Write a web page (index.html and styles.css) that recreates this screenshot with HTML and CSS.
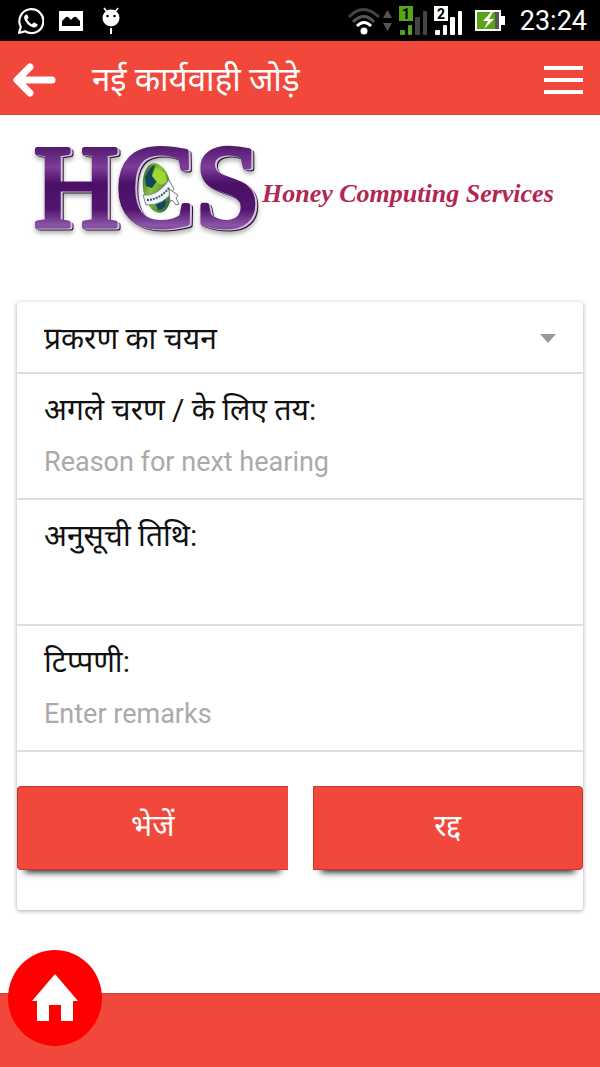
FILE: index.html
```html
<!DOCTYPE html>
<html lang="hi">
<head>
<meta charset="utf-8">
<meta name="viewport" content="width=device-width, initial-scale=1">
<title>नई कार्यवाही जोड़े</title>
<link rel="stylesheet" href="styles.css">
</head>
<body class="page">
<div class="status">
  <div class="status-left">
    <svg width="28" height="28" viewBox="0 0 28 28" aria-hidden="true"><path d="M3 26l1.800-6.200A12 12 0 1 1 9 24.300z" fill="none" stroke="#fff" stroke-width="2.200" stroke-linejoin="round"/><path d="M10 7.500c-2 1-2.500 3-1.200 5.500 2 4 5 6.500 8.700 7.500 2 .4 4-.8 4-3.200l-3.700-2-1.800 1.900c-2-.8-3.800-2.600-4.800-4.700l1.400-1.700-1.300-3.200z" fill="#fff"/></svg>
    <svg width="24" height="20" viewBox="0 0 24 20" aria-hidden="true"><path d="M0 0h24v20H0z" fill="#fff"/><path d="M3 15v-5l4-4q2-1 5 3 3-4 5-3l4 4v5z" fill="#000"/></svg>
    <svg width="18" height="28" viewBox="0 0 18 28" aria-hidden="true"><path d="M2 1l3 4M16 1l-3 4" stroke="#fff" stroke-width="1.500"/><circle cx="9" cy="11" r="8.500" fill="#fff"/><path d="M9 21v6" stroke="#fff" stroke-width="2"/><circle cx="5.500" cy="9" r="1.300"/><circle cx="12.500" cy="9" r="1.300"/></svg>
  </div>
  <div class="status-right">
    <svg width="46" height="30" viewBox="0 0 46 30" fill="none" aria-hidden="true"><path d="M2 11q14-15 30 0" stroke="#444" stroke-width="3"/><path d="M6 16q11-11 21 0" stroke="#555" stroke-width="3"/><path d="M10 20q7-7 14 0" stroke="#fff" stroke-width="3"/><circle cx="17" cy="25" r="3.500" fill="#fff"/><path d="M36 12l4.500-8 4.500 8zM36 17h9l-4.500 8z" fill="#555"/></svg>
    <svg width="30" height="30" viewBox="0 0 30 30" aria-hidden="true"><path d="M1 0h14v15H1z" fill="#57a517"/><text class="sim" x="4" y="13" fill="#000">1</text><rect x="2" y="24" width="5" height="5" rx="1" fill="#57a517"/><rect x="10" y="19" width="4" height="10" rx="1" fill="#57a517"/><rect x="17" y="11" width="5" height="18" rx="1" fill="#444"/><rect x="25" y="5" width="4" height="24" rx="1" fill="#444"/></svg>
    <svg width="30" height="30" viewBox="0 0 30 30" aria-hidden="true"><path d="M1 0h14v15H1z" fill="#fff"/><text class="sim" x="4" y="13" fill="#000">2</text><g fill="#fff"><rect x="2" y="24" width="5" height="5" rx="1"/><rect x="10" y="19" width="4" height="10" rx="1"/><rect x="17" y="11" width="5" height="18" rx="1"/><rect x="25" y="5" width="4" height="24" rx="1"/></g></svg>
    <svg class="battery" width="32" height="23" viewBox="0 0 32 23" aria-hidden="true"><path d="M1 1h26v6h4v9h-4v6H1z" fill="#fff"/><path d="M3 3h18v17H3z" fill="#57a517"/><path d="M21 3h4v17h-4z" fill="#555"/><path d="M17 3L9 12h5l-4 8 10-10h-5l4-7z" fill="#fff"/></svg>
    <span class="clock">23:24</span>
  </div>
</div>
<header class="bar">
  <button class="icon-btn" type="button" aria-label="Back"><svg width="43" height="34" viewBox="0 0 43 34" fill="none" stroke="#fff" stroke-width="7" stroke-linecap="round" stroke-linejoin="round"><path d="M39 17H5M17 4L4 17l13 13"/></svg></button>
  <h1 class="title">नई कार्यवाही जोड़े</h1>
  <button class="icon-btn" type="button" aria-label="Menu"><svg width="39" height="30" viewBox="0 0 39 30" fill="#fff"><path d="M0 1h39v4H0zM0 13h39v4H0zM0 25h39v4H0z"/></svg></button>
</header>
<main class="main">
  <div class="brand">
    <svg class="mark" width="232" height="106" viewBox="0 0 232 106" role="img" aria-label="HCS">
      <defs>
        <linearGradient id="purple" x1="0" y1="0" x2="0" y2="1"><stop offset=".15" stop-color="#4a1263"/><stop offset=".35" stop-color="#7d3d9b"/><stop offset=".48" stop-color="#4b0f66"/><stop offset=".68" stop-color="#531670"/><stop offset=".8" stop-color="#8b55a8"/><stop offset="1" stop-color="#3c0b50"/></linearGradient>
        <linearGradient id="globe" x1="0" y1="0" x2="1" y2="1"><stop offset="0" stop-color="#1d4a3a"/><stop offset=".4" stop-color="#8cc832"/><stop offset="1" stop-color="#174f3c"/></linearGradient>
      </defs>
      <text class="letters" x="4 86 165" y="89" fill="url(#purple)" stroke="url(#purple)">HCS</text>
      <ellipse cx="127" cy="51" rx="14" ry="25" fill="url(#globe)" transform="rotate(-8 127 51)"/>
      <path d="M115 40q6-12 10-12l-3 10 5 6-5 7-6-2zM125 65q9-6 11 0-1 8-8 8z" fill="#13455c"/>
      <path d="M126 31l9 5 2 9-6 3-5-4-4-5z" fill="#a2d632"/>
      <path d="M113 58q14 2 26-15l5 9q-10 17-28 16z" fill="#f2f5f5" stroke="#789" stroke-width="1"/>
      <path d="M117 63q12 0 22-12" fill="none" stroke="#345f68" stroke-width="2" stroke-dasharray="2 1"/>
      <path d="M139 52l9 6-2 3 3 6-3 1-4-5-2 2z" fill="#fff" stroke="#777"/>
    </svg>
    <span class="brand-name">Honey Computing Services</span>
  </div>
  <form class="card">
    <div class="row row-select">
      <select class="select" aria-label="प्रकरण का चयन"><option>प्रकरण का चयन</option></select>
      <svg class="caret" width="16" height="9" viewBox="0 0 16 9" aria-hidden="true"><path d="M0 0h16L8 9z" fill="#999"/></svg>
    </div>
    <div class="row">
      <label class="label" for="reason">अगले चरण / के लिए तय:</label>
      <input class="input" id="reason" type="text" placeholder="Reason for next hearing">
    </div>
    <div class="row">
      <label class="label" for="date">अनुसूची तिथि:</label>
      <input class="input" id="date" type="text">
    </div>
    <div class="row">
      <label class="label" for="remarks">टिप्पणी:</label>
      <input class="input" id="remarks" type="text" placeholder="Enter remarks">
    </div>
    <div class="actions">
      <button class="btn btn-send" type="submit">भेजें</button>
      <button class="btn btn-cancel" type="button">रद्द</button>
    </div>
  </form>
</main>
<footer class="footer">
  <a class="home" href="#" aria-label="Home"><svg width="46" height="48" viewBox="0 0 46 48" fill="#fff"><path d="M23 0l23 27h-5v20H29V31H17v16H5V27H0z"/></svg></a>
</footer>
</body>
</html>
```
FILE: styles.css
```css
* { box-sizing: border-box; }
.page { margin: 0; min-height: 100vh; display: flex; flex-direction: column; background: #fff; color: #111; font-family: Roboto, "Noto Sans", "Noto Sans Devanagari", sans-serif; }
.status { height: 41px; padding: 0 13px 0 16px; display: flex; align-items: center; justify-content: space-between; background: #000; color: #fff; }
.status-left { display: flex; align-items: center; gap: 15px; }
.status-left svg:last-child { margin-left: 4px; }
.status-right { display: flex; align-items: center; gap: 5px; }
.battery { margin: 0 9px 0 6px; }
.sim { font: bold 14px Roboto, sans-serif; }
.clock { font-size: 27px; line-height: 32px; }
.bar { height: 74px; padding: 4px 17px 0 13px; display: flex; align-items: center; gap: 36px; background: #f1483b; border-bottom: 1px solid #cf4439; color: #fff; }
.icon-btn { display: flex; padding: 0; border: 0; background: none; }
.title { flex: 1; margin: 0; font-size: 33px; line-height: 44px; font-weight: 400; }
.main { flex: 1; padding: 0 17px; }
.brand { padding-top: 22px; margin-bottom: 59px; padding-left: 13px; display: flex; align-items: center; }
.mark { flex: none; }
.letters { font: 117px "Liberation Serif", serif; stroke-width: 5px; stroke-linejoin: round; filter: drop-shadow(2px 1px 0 #d5bfdf) drop-shadow(1px 1px 0 #2b1733) drop-shadow(0 3px 2px rgba(0, 0, 0, .3)); }
.brand-name { padding-top: 8px; font: italic bold 26px "Liberation Serif", serif; color: #b32650; white-space: nowrap; }
.card { padding-bottom: 40px; border-radius: 3px; background: #fff; box-shadow: 0 1px 4px rgba(0, 0, 0, .35); }
.row { padding: 18px 27px 16px; height: 126px; border-bottom: 2px solid #ddd; display: flex; flex-direction: column; gap: 16px; }
.row-select { position: relative; height: 72px; padding: 0; }
.select { appearance: none; width: 100%; height: 100%; padding: 4px 27px 0; border: 0; background: none; font: 30px/36px Roboto, "Noto Sans", sans-serif; color: #111; }
.caret { position: absolute; right: 27px; top: 32px; pointer-events: none; }
.label { font-size: 30px; line-height: 36px; }
.input { width: 100%; height: 36px; padding: 0; border: 0; outline: 0; background: none; font: 27px/36px Roboto, "Noto Sans", sans-serif; color: #111; }
.input::placeholder { color: #aaa; opacity: 1; }
.actions { display: grid; grid-template-columns: 1fr 1fr; gap: 25px; margin-top: 34px; }
.btn { height: 84px; padding: 0 0 4px; border: 1px solid #c53a30; background: #f1483b; color: #fff; font: 30px/36px Roboto, "Noto Sans", sans-serif; box-shadow: 0 10px 7px -8px #111; }
.btn-send { border-radius: 4px 0 0 4px; border-right: 0; }
.btn-cancel { border-radius: 0 4px 4px 0; }
.footer { position: relative; height: 74px; background: #f1483b; border-top: 1px solid #cf4439; }
.home { position: absolute; left: 8px; top: -44px; width: 94px; height: 96px; display: flex; align-items: center; justify-content: center; border-radius: 50%; background: #fe0000; }
```
